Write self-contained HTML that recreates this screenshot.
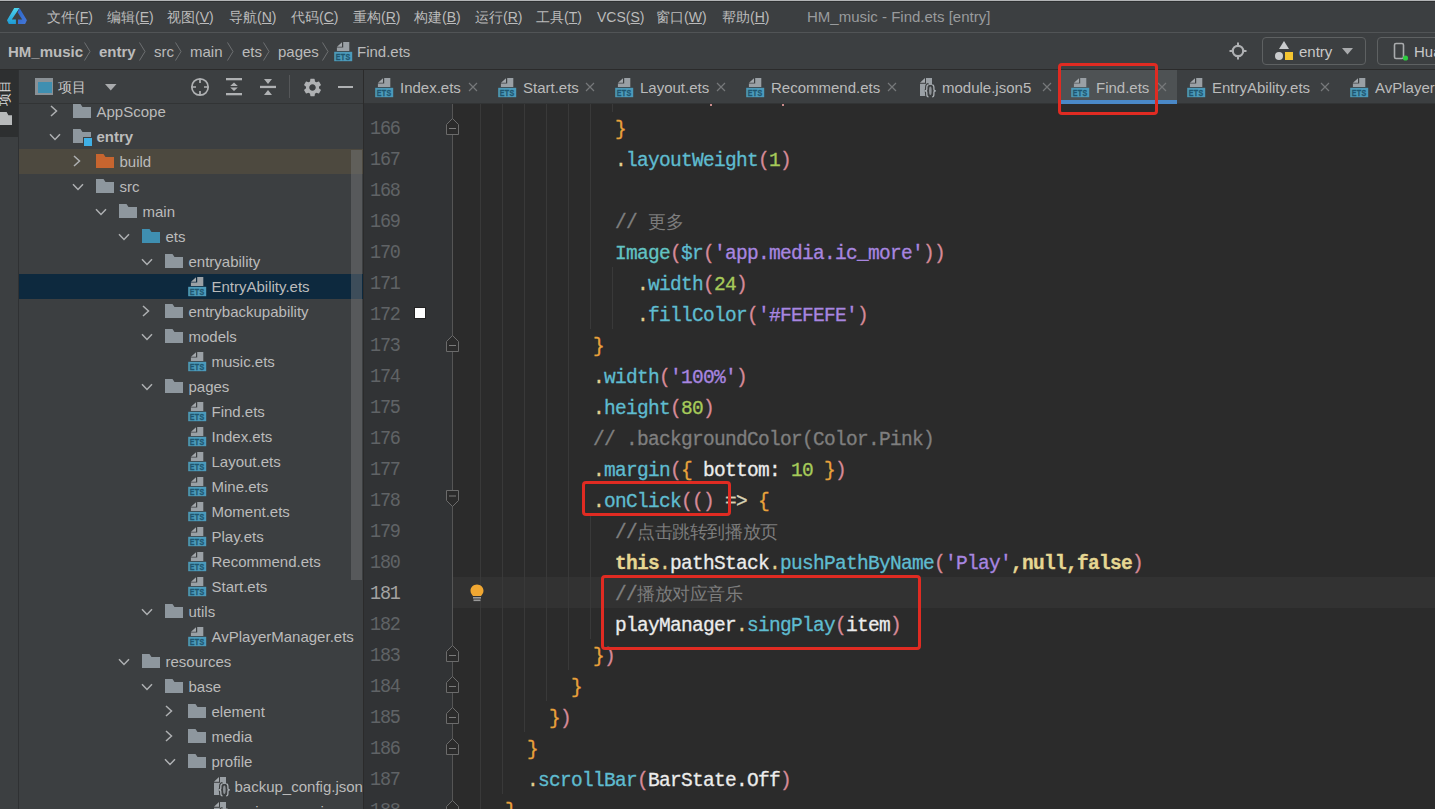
<!DOCTYPE html><html><head><meta charset="utf-8"><title>DevEco</title><style>
html,body{margin:0;padding:0;width:1435px;height:809px;overflow:hidden;background:#3c3f41;font-family:"Liberation Sans",sans-serif;}
div,span,svg{box-sizing:border-box}
.a{position:absolute}
.ui{color:#bbbbbb;font-size:15px;white-space:pre;line-height:20px}
.code{position:absolute;font-family:"Liberation Mono",monospace;font-size:19.50px;letter-spacing:-0.702px;line-height:31px;height:31px;white-space:pre;-webkit-text-stroke:0.3px currentColor}
.ln{position:absolute;font-family:"Liberation Mono",monospace;font-size:18.5px;letter-spacing:-1.3px;line-height:31px;color:#606366;white-space:pre;text-align:right;width:40px;transform:scaleY(1.1);transform-origin:0 22px}
.cjk{font-size:17.6px;letter-spacing:0px;display:inline-block;width:17.6px;color:#7d7d7d;-webkit-text-stroke:0}
.guide{position:absolute;width:1px;background:#393939}
.tr{position:absolute;left:19px;width:344px;height:25px}
.tt{position:absolute;top:0;line-height:25px;font-size:15px;color:#bbbbbb;white-space:pre}
</style></head><body>
<div class="a" style="left:0;top:0;width:1435px;height:1px;background:#b2b4b6"></div>
<div class="a" style="left:0;top:1px;width:1435px;height:1px;background:#2e3031"></div>
<div class="a" style="left:0;top:32px;width:1435px;height:1px;background:#515456"></div>
<svg class="a" style="left:2px;top:4px" width="30" height="24" viewBox="0 0 30 24"><defs><linearGradient id="lg1" x1="0" y1="0" x2="0" y2="1"><stop offset="0" stop-color="#4fd6ee"/><stop offset="1" stop-color="#1e9ad4"/></linearGradient><linearGradient id="lg2" x1="0" y1="0" x2="1" y2="1"><stop offset="0" stop-color="#2a66c8"/><stop offset="1" stop-color="#4677d8"/></linearGradient></defs><path d="M12.2 3.9 L17.5 3.9 L9.8 15.4 L13.9 15.4 L13.9 19.9 L6.8 19.9 L5 16.3 Z" fill="url(#lg1)"/><path d="M17.5 3.9 L24.9 16.3 L23.1 19.9 L16 19.9 L16 15.4 L20.2 15.4 L15.7 8.6 Z" fill="url(#lg2)"/></svg>
<div class="a ui" style="left:47px;top:6.8px;font-size:14px;color:#bbbbbb">文件(<u>F</u>)</div>
<div class="a ui" style="left:107px;top:6.8px;font-size:14px;color:#bbbbbb">编辑(<u>E</u>)</div>
<div class="a ui" style="left:167px;top:6.8px;font-size:14px;color:#bbbbbb">视图(<u>V</u>)</div>
<div class="a ui" style="left:229px;top:6.8px;font-size:14px;color:#bbbbbb">导航(<u>N</u>)</div>
<div class="a ui" style="left:291px;top:6.8px;font-size:14px;color:#bbbbbb">代码(<u>C</u>)</div>
<div class="a ui" style="left:353px;top:6.8px;font-size:14px;color:#bbbbbb">重构(<u>R</u>)</div>
<div class="a ui" style="left:414px;top:6.8px;font-size:14px;color:#bbbbbb">构建(<u>B</u>)</div>
<div class="a ui" style="left:475px;top:6.8px;font-size:14px;color:#bbbbbb">运行(<u>R</u>)</div>
<div class="a ui" style="left:536px;top:6.8px;font-size:14px;color:#bbbbbb">工具(<u>T</u>)</div>
<div class="a ui" style="left:597px;top:6.8px;font-size:14px;color:#bbbbbb">VCS(<u>S</u>)</div>
<div class="a ui" style="left:656px;top:6.8px;font-size:14px;color:#bbbbbb">窗口(<u>W</u>)</div>
<div class="a ui" style="left:722px;top:6.8px;font-size:14px;color:#bbbbbb">帮助(<u>H</u>)</div>
<div class="a ui" style="left:807px;top:6.5px;font-size:15px;color:#999b9d">HM_music - Find.ets [entry]</div>
<div class="a" style="left:0;top:69px;width:1435px;height:1px;background:#2b2b2b"></div>
<div class="a ui" style="left:8px;top:41.5px;font-weight:bold;color:#bbbbbb">HM_music</div>
<svg class="a" style="left:84px;top:42px" width="7" height="19" viewBox="0 0 7 19"><path d="M0.5 0.5 L6 9.5 L0.5 18.5" stroke="#6e7072" stroke-width="1" fill="none"/></svg>
<div class="a ui" style="left:99px;top:41.5px;font-weight:bold">entry</div>
<svg class="a" style="left:139px;top:42px" width="7" height="19" viewBox="0 0 7 19"><path d="M0.5 0.5 L6 9.5 L0.5 18.5" stroke="#6e7072" stroke-width="1" fill="none"/></svg>
<div class="a ui" style="left:154px;top:41.5px">src</div>
<svg class="a" style="left:175px;top:42px" width="7" height="19" viewBox="0 0 7 19"><path d="M0.5 0.5 L6 9.5 L0.5 18.5" stroke="#6e7072" stroke-width="1" fill="none"/></svg>
<div class="a ui" style="left:190px;top:41.5px">main</div>
<svg class="a" style="left:227px;top:42px" width="7" height="19" viewBox="0 0 7 19"><path d="M0.5 0.5 L6 9.5 L0.5 18.5" stroke="#6e7072" stroke-width="1" fill="none"/></svg>
<div class="a ui" style="left:242px;top:41.5px">ets</div>
<svg class="a" style="left:263px;top:42px" width="7" height="19" viewBox="0 0 7 19"><path d="M0.5 0.5 L6 9.5 L0.5 18.5" stroke="#6e7072" stroke-width="1" fill="none"/></svg>
<div class="a ui" style="left:278px;top:41.5px">pages</div>
<svg class="a" style="left:322px;top:42px" width="7" height="19" viewBox="0 0 7 19"><path d="M0.5 0.5 L6 9.5 L0.5 18.5" stroke="#6e7072" stroke-width="1" fill="none"/></svg>
<svg class="a" style="left:333px;top:41px" width="21" height="21" viewBox="0 0 21 21"><path d="M4 5.7 L9 1.2 L9 5.7 Z" fill="#a3a8ac"/><path d="M10.2 0.9 H16.3 V9.9 H3.9 V6.6 H10.2 Z" fill="#9aa0a5"/><rect x="1.2" y="10.8" width="18" height="9.4" fill="#4c9aba"/><text x="10.2" y="18.9" font-family="Liberation Sans" font-size="8.6" font-weight="bold" text-anchor="middle" fill="#1f5670" stroke="#1f5670" stroke-width="0.3" letter-spacing="0.5" textLength="15" lengthAdjust="spacingAndGlyphs">ETS</text></svg>
<div class="a ui" style="left:357px;top:41.5px">Find.ets</div>
<svg class="a" style="left:1229px;top:42px" width="18" height="18" viewBox="0 0 18 18"><circle cx="9" cy="9" r="5.2" stroke="#afb1b3" stroke-width="2.2" fill="none"/><path d="M9 0.5 V3.5 M9 14.5 V17.5 M0.5 9 H3.5 M14.5 9 H17.5" stroke="#afb1b3" stroke-width="2"/></svg>
<div class="a" style="left:1262px;top:37px;width:104px;height:28px;border:1px solid #5e6162;border-radius:4px"></div>
<svg class="a" style="left:1274px;top:40px" width="20" height="21" viewBox="0 0 20 21"><path d="M10 1 L15 9 L5 9 Z" fill="#c9cbcd"/><circle cx="5" cy="16" r="4" fill="#c9cbcd"/><rect x="11" y="12" width="8" height="8" fill="#f4c531"/></svg>
<div class="a ui" style="left:1299px;top:42px;color:#c8c8c8">entry</div>
<svg class="a" style="left:1342px;top:48px" width="12" height="7" viewBox="0 0 12 7"><path d="M0 0 H11 L5.5 6.5 Z" fill="#a9abad"/></svg>
<div class="a" style="left:1377px;top:37px;width:80px;height:28px;border:1px solid #5e6162;border-radius:4px"></div>
<svg class="a" style="left:1393px;top:42px" width="16" height="20" viewBox="0 0 16 20"><rect x="1.5" y="1.5" width="9" height="15" rx="1.5" stroke="#a9abad" stroke-width="1.6" fill="none"/><circle cx="12.5" cy="16" r="2.6" fill="#2ecc40"/></svg>
<div class="a ui" style="left:1414px;top:42px;color:#c8c8c8">Huawei</div>
<div class="a" style="left:0;top:70px;width:18px;height:739px;background:#3c3f41"></div>
<div class="a" style="left:0;top:70px;width:18px;height:67px;background:#2d2f30"></div>
<div class="a" style="left:18px;top:70px;width:1px;height:739px;background:#2f3133"></div>
<div class="a" style="left:-9px;top:86px;width:26px;height:13px;transform:rotate(-90deg);font-size:13px;color:#dddddd;line-height:13px;white-space:pre;">项目</div>
<div class="a" style="left:0;top:112px;width:12px;height:13px;background:#b8babb;clip-path:polygon(0 0,55% 0,70% 25%,100% 25%,100% 100%,0 100%)"></div>
<div class="a" style="left:19px;top:70px;width:344px;height:739px;background:#3c3f41"></div>
<div class="a" style="left:19px;top:103px;width:344px;height:1px;background:#323435"></div>
<div class="a" style="left:363px;top:70px;width:1px;height:739px;background:#2b2b2b"></div>
<div class="a" style="left:35px;top:78px;width:18px;height:17px;background:#8a9196"></div>
<div class="a" style="left:37.5px;top:82px;width:14px;height:11px;background:#3f8fb1"></div>
<div class="a ui" style="left:58px;top:77px;font-size:14px;color:#c8c8c8">项目</div>
<svg class="a" style="left:105px;top:84px" width="12" height="7" viewBox="0 0 12 7"><path d="M0 0 H11.5 L5.75 6.5 Z" fill="#a9abad"/></svg>
<svg class="a" style="left:190px;top:77px" width="20" height="20" viewBox="0 0 20 20"><circle cx="10" cy="10" r="8.2" stroke="#afb1b3" stroke-width="1.7" fill="none"/><path d="M10 2 V6 M10 14 V18 M2 10 H6 M14 10 H18" stroke="#afb1b3" stroke-width="1.7"/></svg>
<svg class="a" style="left:226px;top:78px" width="16" height="18" viewBox="0 0 16 18"><rect x="0" y="0" width="16" height="2.3" fill="#afb1b3"/><rect x="0" y="15" width="16" height="2.3" fill="#afb1b3"/><path d="M8 4.6 L11.8 8.1 H4.2 Z M8 12.9 L11.8 9.4 H4.2 Z" fill="#afb1b3"/></svg>
<svg class="a" style="left:260px;top:78px" width="16" height="18" viewBox="0 0 16 18"><rect x="0" y="7.8" width="16" height="2.3" fill="#afb1b3"/><path d="M4 1 H12 L8 6 Z M4 17 H12 L8 12 Z" fill="#afb1b3"/></svg>
<div class="a" style="left:289px;top:75px;width:1px;height:23px;background:#555759"></div>
<svg class="a" style="left:302.5px;top:77.5px" width="19" height="19" viewBox="1.5 1.5 21 21"><path fill="#afb1b3" d="M19.14 12.94c.04-.3.06-.61.06-.94 0-.32-.02-.64-.07-.94l2.03-1.58a.49.49 0 0 0 .12-.61l-1.92-3.32a.488.488 0 0 0-.59-.22l-2.39.96c-.5-.38-1.03-.7-1.62-.94l-.36-2.54a.484.484 0 0 0-.48-.41h-3.84c-.24 0-.43.17-.47.41l-.36 2.54c-.59.24-1.13.57-1.62.94l-2.39-.96c-.22-.08-.47 0-.59.22L2.74 8.87c-.12.21-.08.47.12.61l2.03 1.58c-.05.3-.09.63-.09.94s.02.64.07.94l-2.03 1.58a.49.49 0 0 0-.12.61l1.92 3.32c.12.22.37.29.59.22l2.39-.96c.5.38 1.03.7 1.62.94l.36 2.54c.05.24.24.41.48.41h3.84c.24 0 .44-.17.47-.41l.36-2.54c.59-.24 1.13-.56 1.62-.94l2.39.96c.22.08.47 0 .59-.22l1.92-3.32c.12-.22.07-.47-.12-.61l-2.01-1.58zM12 15.6c-1.98 0-3.6-1.62-3.6-3.6s1.62-3.6 3.6-3.6 3.6 1.62 3.6 3.6-1.62 3.6-3.6 3.6z"/></svg>
<div class="a" style="left:338px;top:86px;width:15px;height:2px;background:#afb1b3"></div>
<div class="a" style="left:19px;top:104px;width:344px;height:705px;overflow:hidden">
<svg class="a" style="left:31.0px;top:1.0px" width="8" height="12" viewBox="0 0 8 12"><path d="M1 1 L6.5 6 L1 11" stroke="#aeb0b2" stroke-width="1.5" fill="none"/></svg>
<svg class="a" style="left:54px;top:0px" width="18" height="14" viewBox="0 0 18 14"><path d="M0 0 H7.5 L9.5 3 H18 V14 H0 Z" fill="#8e979e"/></svg>
<div class="tt" style="left:77.5px;top:-5px;font-weight:normal">AppScope</div>
<svg class="a" style="left:30.0px;top:28.5px" width="12" height="8" viewBox="0 0 12 8"><path d="M1 1.2 L6 6.5 L11 1.2" stroke="#aeb0b2" stroke-width="1.5" fill="none"/></svg>
<svg class="a" style="left:54px;top:25px" width="18" height="14" viewBox="0 0 18 14"><path d="M0 0 H7.5 L9.5 3 H18 V14 H0 Z" fill="#8e979e"/></svg>
<div class="a" style="left:64px;top:33px;width:10px;height:10px;background:#3fb0e6;border:1px solid #3c3f41"></div>
<div class="tt" style="left:77.5px;top:20px;font-weight:bold">entry</div>
<div class="a" style="left:0;top:45px;width:344px;height:25px;background:#4d493f"></div>
<svg class="a" style="left:54.0px;top:51.0px" width="8" height="12" viewBox="0 0 8 12"><path d="M1 1 L6.5 6 L1 11" stroke="#aeb0b2" stroke-width="1.5" fill="none"/></svg>
<svg class="a" style="left:77px;top:50px" width="18" height="14" viewBox="0 0 18 14"><path d="M0 0 H7.5 L9.5 3 H18 V14 H0 Z" fill="#c7652f"/></svg>
<div class="tt" style="left:100.5px;top:45px;font-weight:normal">build</div>
<svg class="a" style="left:53.0px;top:78.5px" width="12" height="8" viewBox="0 0 12 8"><path d="M1 1.2 L6 6.5 L11 1.2" stroke="#aeb0b2" stroke-width="1.5" fill="none"/></svg>
<svg class="a" style="left:77px;top:75px" width="18" height="14" viewBox="0 0 18 14"><path d="M0 0 H7.5 L9.5 3 H18 V14 H0 Z" fill="#8e979e"/></svg>
<div class="tt" style="left:100.5px;top:70px;font-weight:normal">src</div>
<svg class="a" style="left:76.0px;top:103.5px" width="12" height="8" viewBox="0 0 12 8"><path d="M1 1.2 L6 6.5 L11 1.2" stroke="#aeb0b2" stroke-width="1.5" fill="none"/></svg>
<svg class="a" style="left:100px;top:100px" width="18" height="14" viewBox="0 0 18 14"><path d="M0 0 H7.5 L9.5 3 H18 V14 H0 Z" fill="#8e979e"/></svg>
<div class="tt" style="left:123.5px;top:95px;font-weight:normal">main</div>
<svg class="a" style="left:99.0px;top:128.5px" width="12" height="8" viewBox="0 0 12 8"><path d="M1 1.2 L6 6.5 L11 1.2" stroke="#aeb0b2" stroke-width="1.5" fill="none"/></svg>
<svg class="a" style="left:123px;top:125px" width="18" height="14" viewBox="0 0 18 14"><path d="M0 0 H7.5 L9.5 3 H18 V14 H0 Z" fill="#3f8fb1"/></svg>
<div class="tt" style="left:146.5px;top:120px;font-weight:normal">ets</div>
<svg class="a" style="left:122.0px;top:153.5px" width="12" height="8" viewBox="0 0 12 8"><path d="M1 1.2 L6 6.5 L11 1.2" stroke="#aeb0b2" stroke-width="1.5" fill="none"/></svg>
<svg class="a" style="left:146px;top:150px" width="18" height="14" viewBox="0 0 18 14"><path d="M0 0 H7.5 L9.5 3 H18 V14 H0 Z" fill="#8e979e"/></svg>
<div class="tt" style="left:169.5px;top:145px;font-weight:normal">entryability</div>
<div class="a" style="left:0;top:170px;width:344px;height:25px;background:#0d293e"></div>
<svg class="a" style="left:168px;top:172px" width="21" height="21" viewBox="0 0 21 21"><path d="M4 5.7 L9 1.2 L9 5.7 Z" fill="#a3a8ac"/><path d="M10.2 0.9 H16.3 V9.9 H3.9 V6.6 H10.2 Z" fill="#9aa0a5"/><rect x="1.2" y="10.8" width="18" height="9.4" fill="#4c9aba"/><text x="10.2" y="18.9" font-family="Liberation Sans" font-size="8.6" font-weight="bold" text-anchor="middle" fill="#1f5670" stroke="#1f5670" stroke-width="0.3" letter-spacing="0.5" textLength="15" lengthAdjust="spacingAndGlyphs">ETS</text></svg>
<div class="tt" style="left:192.5px;top:170px;font-weight:normal">EntryAbility.ets</div>
<svg class="a" style="left:123.0px;top:201.0px" width="8" height="12" viewBox="0 0 8 12"><path d="M1 1 L6.5 6 L1 11" stroke="#aeb0b2" stroke-width="1.5" fill="none"/></svg>
<svg class="a" style="left:146px;top:200px" width="18" height="14" viewBox="0 0 18 14"><path d="M0 0 H7.5 L9.5 3 H18 V14 H0 Z" fill="#8e979e"/></svg>
<div class="tt" style="left:169.5px;top:195px;font-weight:normal">entrybackupability</div>
<svg class="a" style="left:122.0px;top:228.5px" width="12" height="8" viewBox="0 0 12 8"><path d="M1 1.2 L6 6.5 L11 1.2" stroke="#aeb0b2" stroke-width="1.5" fill="none"/></svg>
<svg class="a" style="left:146px;top:225px" width="18" height="14" viewBox="0 0 18 14"><path d="M0 0 H7.5 L9.5 3 H18 V14 H0 Z" fill="#8e979e"/></svg>
<div class="tt" style="left:169.5px;top:220px;font-weight:normal">models</div>
<svg class="a" style="left:168px;top:247px" width="21" height="21" viewBox="0 0 21 21"><path d="M4 5.7 L9 1.2 L9 5.7 Z" fill="#a3a8ac"/><path d="M10.2 0.9 H16.3 V9.9 H3.9 V6.6 H10.2 Z" fill="#9aa0a5"/><rect x="1.2" y="10.8" width="18" height="9.4" fill="#4c9aba"/><text x="10.2" y="18.9" font-family="Liberation Sans" font-size="8.6" font-weight="bold" text-anchor="middle" fill="#1f5670" stroke="#1f5670" stroke-width="0.3" letter-spacing="0.5" textLength="15" lengthAdjust="spacingAndGlyphs">ETS</text></svg>
<div class="tt" style="left:192.5px;top:245px;font-weight:normal">music.ets</div>
<svg class="a" style="left:122.0px;top:278.5px" width="12" height="8" viewBox="0 0 12 8"><path d="M1 1.2 L6 6.5 L11 1.2" stroke="#aeb0b2" stroke-width="1.5" fill="none"/></svg>
<svg class="a" style="left:146px;top:275px" width="18" height="14" viewBox="0 0 18 14"><path d="M0 0 H7.5 L9.5 3 H18 V14 H0 Z" fill="#8e979e"/></svg>
<div class="tt" style="left:169.5px;top:270px;font-weight:normal">pages</div>
<svg class="a" style="left:168px;top:297px" width="21" height="21" viewBox="0 0 21 21"><path d="M4 5.7 L9 1.2 L9 5.7 Z" fill="#a3a8ac"/><path d="M10.2 0.9 H16.3 V9.9 H3.9 V6.6 H10.2 Z" fill="#9aa0a5"/><rect x="1.2" y="10.8" width="18" height="9.4" fill="#4c9aba"/><text x="10.2" y="18.9" font-family="Liberation Sans" font-size="8.6" font-weight="bold" text-anchor="middle" fill="#1f5670" stroke="#1f5670" stroke-width="0.3" letter-spacing="0.5" textLength="15" lengthAdjust="spacingAndGlyphs">ETS</text></svg>
<div class="tt" style="left:192.5px;top:295px;font-weight:normal">Find.ets</div>
<svg class="a" style="left:168px;top:322px" width="21" height="21" viewBox="0 0 21 21"><path d="M4 5.7 L9 1.2 L9 5.7 Z" fill="#a3a8ac"/><path d="M10.2 0.9 H16.3 V9.9 H3.9 V6.6 H10.2 Z" fill="#9aa0a5"/><rect x="1.2" y="10.8" width="18" height="9.4" fill="#4c9aba"/><text x="10.2" y="18.9" font-family="Liberation Sans" font-size="8.6" font-weight="bold" text-anchor="middle" fill="#1f5670" stroke="#1f5670" stroke-width="0.3" letter-spacing="0.5" textLength="15" lengthAdjust="spacingAndGlyphs">ETS</text></svg>
<div class="tt" style="left:192.5px;top:320px;font-weight:normal">Index.ets</div>
<svg class="a" style="left:168px;top:347px" width="21" height="21" viewBox="0 0 21 21"><path d="M4 5.7 L9 1.2 L9 5.7 Z" fill="#a3a8ac"/><path d="M10.2 0.9 H16.3 V9.9 H3.9 V6.6 H10.2 Z" fill="#9aa0a5"/><rect x="1.2" y="10.8" width="18" height="9.4" fill="#4c9aba"/><text x="10.2" y="18.9" font-family="Liberation Sans" font-size="8.6" font-weight="bold" text-anchor="middle" fill="#1f5670" stroke="#1f5670" stroke-width="0.3" letter-spacing="0.5" textLength="15" lengthAdjust="spacingAndGlyphs">ETS</text></svg>
<div class="tt" style="left:192.5px;top:345px;font-weight:normal">Layout.ets</div>
<svg class="a" style="left:168px;top:372px" width="21" height="21" viewBox="0 0 21 21"><path d="M4 5.7 L9 1.2 L9 5.7 Z" fill="#a3a8ac"/><path d="M10.2 0.9 H16.3 V9.9 H3.9 V6.6 H10.2 Z" fill="#9aa0a5"/><rect x="1.2" y="10.8" width="18" height="9.4" fill="#4c9aba"/><text x="10.2" y="18.9" font-family="Liberation Sans" font-size="8.6" font-weight="bold" text-anchor="middle" fill="#1f5670" stroke="#1f5670" stroke-width="0.3" letter-spacing="0.5" textLength="15" lengthAdjust="spacingAndGlyphs">ETS</text></svg>
<div class="tt" style="left:192.5px;top:370px;font-weight:normal">Mine.ets</div>
<svg class="a" style="left:168px;top:397px" width="21" height="21" viewBox="0 0 21 21"><path d="M4 5.7 L9 1.2 L9 5.7 Z" fill="#a3a8ac"/><path d="M10.2 0.9 H16.3 V9.9 H3.9 V6.6 H10.2 Z" fill="#9aa0a5"/><rect x="1.2" y="10.8" width="18" height="9.4" fill="#4c9aba"/><text x="10.2" y="18.9" font-family="Liberation Sans" font-size="8.6" font-weight="bold" text-anchor="middle" fill="#1f5670" stroke="#1f5670" stroke-width="0.3" letter-spacing="0.5" textLength="15" lengthAdjust="spacingAndGlyphs">ETS</text></svg>
<div class="tt" style="left:192.5px;top:395px;font-weight:normal">Moment.ets</div>
<svg class="a" style="left:168px;top:422px" width="21" height="21" viewBox="0 0 21 21"><path d="M4 5.7 L9 1.2 L9 5.7 Z" fill="#a3a8ac"/><path d="M10.2 0.9 H16.3 V9.9 H3.9 V6.6 H10.2 Z" fill="#9aa0a5"/><rect x="1.2" y="10.8" width="18" height="9.4" fill="#4c9aba"/><text x="10.2" y="18.9" font-family="Liberation Sans" font-size="8.6" font-weight="bold" text-anchor="middle" fill="#1f5670" stroke="#1f5670" stroke-width="0.3" letter-spacing="0.5" textLength="15" lengthAdjust="spacingAndGlyphs">ETS</text></svg>
<div class="tt" style="left:192.5px;top:420px;font-weight:normal">Play.ets</div>
<svg class="a" style="left:168px;top:447px" width="21" height="21" viewBox="0 0 21 21"><path d="M4 5.7 L9 1.2 L9 5.7 Z" fill="#a3a8ac"/><path d="M10.2 0.9 H16.3 V9.9 H3.9 V6.6 H10.2 Z" fill="#9aa0a5"/><rect x="1.2" y="10.8" width="18" height="9.4" fill="#4c9aba"/><text x="10.2" y="18.9" font-family="Liberation Sans" font-size="8.6" font-weight="bold" text-anchor="middle" fill="#1f5670" stroke="#1f5670" stroke-width="0.3" letter-spacing="0.5" textLength="15" lengthAdjust="spacingAndGlyphs">ETS</text></svg>
<div class="tt" style="left:192.5px;top:445px;font-weight:normal">Recommend.ets</div>
<svg class="a" style="left:168px;top:472px" width="21" height="21" viewBox="0 0 21 21"><path d="M4 5.7 L9 1.2 L9 5.7 Z" fill="#a3a8ac"/><path d="M10.2 0.9 H16.3 V9.9 H3.9 V6.6 H10.2 Z" fill="#9aa0a5"/><rect x="1.2" y="10.8" width="18" height="9.4" fill="#4c9aba"/><text x="10.2" y="18.9" font-family="Liberation Sans" font-size="8.6" font-weight="bold" text-anchor="middle" fill="#1f5670" stroke="#1f5670" stroke-width="0.3" letter-spacing="0.5" textLength="15" lengthAdjust="spacingAndGlyphs">ETS</text></svg>
<div class="tt" style="left:192.5px;top:470px;font-weight:normal">Start.ets</div>
<svg class="a" style="left:122.0px;top:503.5px" width="12" height="8" viewBox="0 0 12 8"><path d="M1 1.2 L6 6.5 L11 1.2" stroke="#aeb0b2" stroke-width="1.5" fill="none"/></svg>
<svg class="a" style="left:146px;top:500px" width="18" height="14" viewBox="0 0 18 14"><path d="M0 0 H7.5 L9.5 3 H18 V14 H0 Z" fill="#8e979e"/></svg>
<div class="tt" style="left:169.5px;top:495px;font-weight:normal">utils</div>
<svg class="a" style="left:168px;top:522px" width="21" height="21" viewBox="0 0 21 21"><path d="M4 5.7 L9 1.2 L9 5.7 Z" fill="#a3a8ac"/><path d="M10.2 0.9 H16.3 V9.9 H3.9 V6.6 H10.2 Z" fill="#9aa0a5"/><rect x="1.2" y="10.8" width="18" height="9.4" fill="#4c9aba"/><text x="10.2" y="18.9" font-family="Liberation Sans" font-size="8.6" font-weight="bold" text-anchor="middle" fill="#1f5670" stroke="#1f5670" stroke-width="0.3" letter-spacing="0.5" textLength="15" lengthAdjust="spacingAndGlyphs">ETS</text></svg>
<div class="tt" style="left:192.5px;top:520px;font-weight:normal">AvPlayerManager.ets</div>
<svg class="a" style="left:99.0px;top:553.5px" width="12" height="8" viewBox="0 0 12 8"><path d="M1 1.2 L6 6.5 L11 1.2" stroke="#aeb0b2" stroke-width="1.5" fill="none"/></svg>
<svg class="a" style="left:123px;top:550px" width="18" height="14" viewBox="0 0 18 14"><path d="M0 0 H7.5 L9.5 3 H18 V14 H0 Z" fill="#8e979e"/></svg>
<div class="tt" style="left:146.5px;top:545px;font-weight:normal">resources</div>
<svg class="a" style="left:122.0px;top:578.5px" width="12" height="8" viewBox="0 0 12 8"><path d="M1 1.2 L6 6.5 L11 1.2" stroke="#aeb0b2" stroke-width="1.5" fill="none"/></svg>
<svg class="a" style="left:146px;top:575px" width="18" height="14" viewBox="0 0 18 14"><path d="M0 0 H7.5 L9.5 3 H18 V14 H0 Z" fill="#8e979e"/></svg>
<div class="tt" style="left:169.5px;top:570px;font-weight:normal">base</div>
<svg class="a" style="left:146.0px;top:601.0px" width="8" height="12" viewBox="0 0 8 12"><path d="M1 1 L6.5 6 L1 11" stroke="#aeb0b2" stroke-width="1.5" fill="none"/></svg>
<svg class="a" style="left:169px;top:600px" width="18" height="14" viewBox="0 0 18 14"><path d="M0 0 H7.5 L9.5 3 H18 V14 H0 Z" fill="#8e979e"/></svg>
<div class="tt" style="left:192.5px;top:595px;font-weight:normal">element</div>
<svg class="a" style="left:146.0px;top:626.0px" width="8" height="12" viewBox="0 0 8 12"><path d="M1 1 L6.5 6 L1 11" stroke="#aeb0b2" stroke-width="1.5" fill="none"/></svg>
<svg class="a" style="left:169px;top:625px" width="18" height="14" viewBox="0 0 18 14"><path d="M0 0 H7.5 L9.5 3 H18 V14 H0 Z" fill="#8e979e"/></svg>
<div class="tt" style="left:192.5px;top:620px;font-weight:normal">media</div>
<svg class="a" style="left:145.0px;top:653.5px" width="12" height="8" viewBox="0 0 12 8"><path d="M1 1.2 L6 6.5 L11 1.2" stroke="#aeb0b2" stroke-width="1.5" fill="none"/></svg>
<svg class="a" style="left:169px;top:650px" width="18" height="14" viewBox="0 0 18 14"><path d="M0 0 H7.5 L9.5 3 H18 V14 H0 Z" fill="#8e979e"/></svg>
<div class="tt" style="left:192.5px;top:645px;font-weight:normal">profile</div>
<svg class="a" style="left:192.0px;top:672.0px" width="21" height="21" viewBox="0 0 21 21"><path d="M3 5.7 L8 1 L8 5.7 Z" fill="#a4a9ad"/><rect x="9" y="1" width="6" height="7" fill="#9aa0a5"/><rect x="3" y="6.8" width="12" height="12.2" fill="#9aa0a5"/><path d="M11.5 7.8 C9.8 7.8 9.8 9 9.8 10.5 V12.2 C9.8 13.2 9 13.8 7.8 13.8 C9 13.8 9.8 14.4 9.8 15.4 V17.2 C9.8 18.7 9.8 19.8 11.5 19.8 M15.2 7.8 C16.9 7.8 16.9 9 16.9 10.5 V12.2 C16.9 13.2 17.7 13.8 18.9 13.8 C17.7 13.8 16.9 14.4 16.9 15.4 V17.2 C16.9 18.7 16.9 19.8 15.2 19.8" stroke="#3c3f41" stroke-width="3.6" fill="#3c3f41"/><rect x="9.6" y="8" width="7.6" height="11.6" fill="#3c3f41"/><path d="M11.5 7.8 C9.8 7.8 9.8 9 9.8 10.5 V12.2 C9.8 13.2 9 13.8 7.8 13.8 C9 13.8 9.8 14.4 9.8 15.4 V17.2 C9.8 18.7 9.8 19.8 11.5 19.8 M15.2 7.8 C16.9 7.8 16.9 9 16.9 10.5 V12.2 C16.9 13.2 17.7 13.8 18.9 13.8 C17.7 13.8 16.9 14.4 16.9 15.4 V17.2 C16.9 18.7 16.9 19.8 15.2 19.8" stroke="#a9aeb2" stroke-width="1.3" fill="none"/><ellipse cx="13.35" cy="13.8" rx="1.3" ry="4.2" fill="#8d9296"/></svg>
<div class="tt" style="left:215.5px;top:670px;font-weight:normal">backup_config.json</div>
<svg class="a" style="left:192.0px;top:697.0px" width="21" height="21" viewBox="0 0 21 21"><path d="M3 5.7 L8 1 L8 5.7 Z" fill="#a4a9ad"/><rect x="9" y="1" width="6" height="7" fill="#9aa0a5"/><rect x="3" y="6.8" width="12" height="12.2" fill="#9aa0a5"/><path d="M11.5 7.8 C9.8 7.8 9.8 9 9.8 10.5 V12.2 C9.8 13.2 9 13.8 7.8 13.8 C9 13.8 9.8 14.4 9.8 15.4 V17.2 C9.8 18.7 9.8 19.8 11.5 19.8 M15.2 7.8 C16.9 7.8 16.9 9 16.9 10.5 V12.2 C16.9 13.2 17.7 13.8 18.9 13.8 C17.7 13.8 16.9 14.4 16.9 15.4 V17.2 C16.9 18.7 16.9 19.8 15.2 19.8" stroke="#3c3f41" stroke-width="3.6" fill="#3c3f41"/><rect x="9.6" y="8" width="7.6" height="11.6" fill="#3c3f41"/><path d="M11.5 7.8 C9.8 7.8 9.8 9 9.8 10.5 V12.2 C9.8 13.2 9 13.8 7.8 13.8 C9 13.8 9.8 14.4 9.8 15.4 V17.2 C9.8 18.7 9.8 19.8 11.5 19.8 M15.2 7.8 C16.9 7.8 16.9 9 16.9 10.5 V12.2 C16.9 13.2 17.7 13.8 18.9 13.8 C17.7 13.8 16.9 14.4 16.9 15.4 V17.2 C16.9 18.7 16.9 19.8 15.2 19.8" stroke="#a9aeb2" stroke-width="1.3" fill="none"/><ellipse cx="13.35" cy="13.8" rx="1.3" ry="4.2" fill="#8d9296"/></svg>
<div class="tt" style="left:215.5px;top:695px;font-weight:normal">main_pages.json</div>
</div>
<div class="a" style="left:351px;top:150px;width:11px;height:430px;background:rgba(120,122,124,0.45)"></div>
<div class="a" style="left:364px;top:70px;width:1071px;height:33px;background:#3c3f41"></div>
<div class="a" style="left:364px;top:103px;width:1071px;height:1px;background:#323435"></div>
<div class="a" style="left:1061px;top:70px;width:116px;height:30px;background:#4e5254"></div>
<div class="a" style="left:1061px;top:100px;width:116px;height:3.5px;background:#4a88c7"></div>
<svg class="a" style="left:374px;top:77px" width="21" height="21" viewBox="0 0 21 21"><path d="M4 5.7 L9 1.2 L9 5.7 Z" fill="#a3a8ac"/><path d="M10.2 0.9 H16.3 V9.9 H3.9 V6.6 H10.2 Z" fill="#9aa0a5"/><rect x="1.2" y="10.8" width="18" height="9.4" fill="#4c9aba"/><text x="10.2" y="18.9" font-family="Liberation Sans" font-size="8.6" font-weight="bold" text-anchor="middle" fill="#1f5670" stroke="#1f5670" stroke-width="0.3" letter-spacing="0.5" textLength="15" lengthAdjust="spacingAndGlyphs">ETS</text></svg>
<div class="a ui" style="left:400px;top:77.5px;color:#bbbbbb">Index.ets</div>
<svg class="a" style="left:497px;top:77px" width="21" height="21" viewBox="0 0 21 21"><path d="M4 5.7 L9 1.2 L9 5.7 Z" fill="#a3a8ac"/><path d="M10.2 0.9 H16.3 V9.9 H3.9 V6.6 H10.2 Z" fill="#9aa0a5"/><rect x="1.2" y="10.8" width="18" height="9.4" fill="#4c9aba"/><text x="10.2" y="18.9" font-family="Liberation Sans" font-size="8.6" font-weight="bold" text-anchor="middle" fill="#1f5670" stroke="#1f5670" stroke-width="0.3" letter-spacing="0.5" textLength="15" lengthAdjust="spacingAndGlyphs">ETS</text></svg>
<div class="a ui" style="left:523px;top:77.5px;color:#bbbbbb">Start.ets</div>
<svg class="a" style="left:614px;top:77px" width="21" height="21" viewBox="0 0 21 21"><path d="M4 5.7 L9 1.2 L9 5.7 Z" fill="#a3a8ac"/><path d="M10.2 0.9 H16.3 V9.9 H3.9 V6.6 H10.2 Z" fill="#9aa0a5"/><rect x="1.2" y="10.8" width="18" height="9.4" fill="#4c9aba"/><text x="10.2" y="18.9" font-family="Liberation Sans" font-size="8.6" font-weight="bold" text-anchor="middle" fill="#1f5670" stroke="#1f5670" stroke-width="0.3" letter-spacing="0.5" textLength="15" lengthAdjust="spacingAndGlyphs">ETS</text></svg>
<div class="a ui" style="left:640px;top:77.5px;color:#bbbbbb">Layout.ets</div>
<svg class="a" style="left:745px;top:77px" width="21" height="21" viewBox="0 0 21 21"><path d="M4 5.7 L9 1.2 L9 5.7 Z" fill="#a3a8ac"/><path d="M10.2 0.9 H16.3 V9.9 H3.9 V6.6 H10.2 Z" fill="#9aa0a5"/><rect x="1.2" y="10.8" width="18" height="9.4" fill="#4c9aba"/><text x="10.2" y="18.9" font-family="Liberation Sans" font-size="8.6" font-weight="bold" text-anchor="middle" fill="#1f5670" stroke="#1f5670" stroke-width="0.3" letter-spacing="0.5" textLength="15" lengthAdjust="spacingAndGlyphs">ETS</text></svg>
<div class="a ui" style="left:771px;top:77.5px;color:#bbbbbb">Recommend.ets</div>
<svg class="a" style="left:917.0px;top:77.0px" width="21" height="21" viewBox="0 0 21 21"><path d="M3 5.7 L8 1 L8 5.7 Z" fill="#a4a9ad"/><rect x="9" y="1" width="6" height="7" fill="#9aa0a5"/><rect x="3" y="6.8" width="12" height="12.2" fill="#9aa0a5"/><path d="M11.5 7.8 C9.8 7.8 9.8 9 9.8 10.5 V12.2 C9.8 13.2 9 13.8 7.8 13.8 C9 13.8 9.8 14.4 9.8 15.4 V17.2 C9.8 18.7 9.8 19.8 11.5 19.8 M15.2 7.8 C16.9 7.8 16.9 9 16.9 10.5 V12.2 C16.9 13.2 17.7 13.8 18.9 13.8 C17.7 13.8 16.9 14.4 16.9 15.4 V17.2 C16.9 18.7 16.9 19.8 15.2 19.8" stroke="#3c3f41" stroke-width="3.6" fill="#3c3f41"/><rect x="9.6" y="8" width="7.6" height="11.6" fill="#3c3f41"/><path d="M11.5 7.8 C9.8 7.8 9.8 9 9.8 10.5 V12.2 C9.8 13.2 9 13.8 7.8 13.8 C9 13.8 9.8 14.4 9.8 15.4 V17.2 C9.8 18.7 9.8 19.8 11.5 19.8 M15.2 7.8 C16.9 7.8 16.9 9 16.9 10.5 V12.2 C16.9 13.2 17.7 13.8 18.9 13.8 C17.7 13.8 16.9 14.4 16.9 15.4 V17.2 C16.9 18.7 16.9 19.8 15.2 19.8" stroke="#a9aeb2" stroke-width="1.3" fill="none"/><ellipse cx="13.35" cy="13.8" rx="1.3" ry="4.2" fill="#8d9296"/></svg>
<div class="a ui" style="left:942px;top:77.5px;color:#bbbbbb">module.json5</div>
<svg class="a" style="left:1070px;top:77px" width="21" height="21" viewBox="0 0 21 21"><path d="M4 5.7 L9 1.2 L9 5.7 Z" fill="#a3a8ac"/><path d="M10.2 0.9 H16.3 V9.9 H3.9 V6.6 H10.2 Z" fill="#9aa0a5"/><rect x="1.2" y="10.8" width="18" height="9.4" fill="#4c9aba"/><text x="10.2" y="18.9" font-family="Liberation Sans" font-size="8.6" font-weight="bold" text-anchor="middle" fill="#1f5670" stroke="#1f5670" stroke-width="0.3" letter-spacing="0.5" textLength="15" lengthAdjust="spacingAndGlyphs">ETS</text></svg>
<div class="a ui" style="left:1096px;top:77.5px;color:#bbbbbb">Find.ets</div>
<svg class="a" style="left:1186px;top:77px" width="21" height="21" viewBox="0 0 21 21"><path d="M4 5.7 L9 1.2 L9 5.7 Z" fill="#a3a8ac"/><path d="M10.2 0.9 H16.3 V9.9 H3.9 V6.6 H10.2 Z" fill="#9aa0a5"/><rect x="1.2" y="10.8" width="18" height="9.4" fill="#4c9aba"/><text x="10.2" y="18.9" font-family="Liberation Sans" font-size="8.6" font-weight="bold" text-anchor="middle" fill="#1f5670" stroke="#1f5670" stroke-width="0.3" letter-spacing="0.5" textLength="15" lengthAdjust="spacingAndGlyphs">ETS</text></svg>
<div class="a ui" style="left:1212px;top:77.5px;color:#bbbbbb">EntryAbility.ets</div>
<svg class="a" style="left:1349px;top:77px" width="21" height="21" viewBox="0 0 21 21"><path d="M4 5.7 L9 1.2 L9 5.7 Z" fill="#a3a8ac"/><path d="M10.2 0.9 H16.3 V9.9 H3.9 V6.6 H10.2 Z" fill="#9aa0a5"/><rect x="1.2" y="10.8" width="18" height="9.4" fill="#4c9aba"/><text x="10.2" y="18.9" font-family="Liberation Sans" font-size="8.6" font-weight="bold" text-anchor="middle" fill="#1f5670" stroke="#1f5670" stroke-width="0.3" letter-spacing="0.5" textLength="15" lengthAdjust="spacingAndGlyphs">ETS</text></svg>
<div class="a ui" style="left:1375px;top:77.5px;color:#bbbbbb">AvPlayerManager.ets</div>
<svg class="a" style="left:468px;top:82px" width="10" height="10" viewBox="0 0 10 10"><path d="M1 1 L9 9 M9 1 L1 9" stroke="#76787a" stroke-width="1.2"/></svg>
<svg class="a" style="left:585px;top:82px" width="10" height="10" viewBox="0 0 10 10"><path d="M1 1 L9 9 M9 1 L1 9" stroke="#76787a" stroke-width="1.2"/></svg>
<svg class="a" style="left:716px;top:82px" width="10" height="10" viewBox="0 0 10 10"><path d="M1 1 L9 9 M9 1 L1 9" stroke="#76787a" stroke-width="1.2"/></svg>
<svg class="a" style="left:887px;top:82px" width="10" height="10" viewBox="0 0 10 10"><path d="M1 1 L9 9 M9 1 L1 9" stroke="#76787a" stroke-width="1.2"/></svg>
<svg class="a" style="left:1042px;top:82px" width="10" height="10" viewBox="0 0 10 10"><path d="M1 1 L9 9 M9 1 L1 9" stroke="#76787a" stroke-width="1.2"/></svg>
<svg class="a" style="left:1157px;top:82px" width="10" height="10" viewBox="0 0 10 10"><path d="M1 1 L9 9 M9 1 L1 9" stroke="#76787a" stroke-width="1.2"/></svg>
<svg class="a" style="left:1320px;top:82px" width="10" height="10" viewBox="0 0 10 10"><path d="M1 1 L9 9 M9 1 L1 9" stroke="#76787a" stroke-width="1.2"/></svg>
<div class="a" style="left:364px;top:104px;width:89px;height:705px;background:#313335"></div>
<div class="a" style="left:453px;top:104px;width:982px;height:705px;background:#2b2b2b"></div>
<div class="a" style="left:0;top:104px;width:1435px;height:705px;overflow:hidden">
<div class="a" style="left:453px;top:473px;width:982px;height:31px;background:#323232"></div>
<div class="a" style="left:452px;top:0;width:1px;height:705px;background:#555555"></div>
<div class="guide" style="left:480px;top:-23px;height:744px"></div>
<div class="guide" style="left:502px;top:-23px;height:713px"></div>
<div class="guide" style="left:524px;top:-23px;height:651px"></div>
<div class="guide" style="left:546px;top:-23px;height:620px"></div>
<div class="guide" style="left:568px;top:-23px;height:589px"></div>
<div class="guide" style="left:590px;top:-23px;height:248px"></div>
<div class="guide" style="left:590px;top:411px;height:124px"></div>
<div class="guide" style="left:612px;top:-23px;height:31px"></div>
<div class="guide" style="left:612px;top:163px;height:62px"></div>
<div class="ln" style="left:359.5px;top:-21.0px;color:#606366">165</div>
<div class="ln" style="left:359.5px;top:10.0px;color:#606366">166</div>
<div class="ln" style="left:359.5px;top:41.0px;color:#606366">167</div>
<div class="ln" style="left:359.5px;top:72.0px;color:#606366">168</div>
<div class="ln" style="left:359.5px;top:103.0px;color:#606366">169</div>
<div class="ln" style="left:359.5px;top:134.0px;color:#606366">170</div>
<div class="ln" style="left:359.5px;top:165.0px;color:#606366">171</div>
<div class="ln" style="left:359.5px;top:196.0px;color:#606366">172</div>
<div class="ln" style="left:359.5px;top:227.0px;color:#606366">173</div>
<div class="ln" style="left:359.5px;top:258.0px;color:#606366">174</div>
<div class="ln" style="left:359.5px;top:289.0px;color:#606366">175</div>
<div class="ln" style="left:359.5px;top:320.0px;color:#606366">176</div>
<div class="ln" style="left:359.5px;top:351.0px;color:#606366">177</div>
<div class="ln" style="left:359.5px;top:382.0px;color:#606366">178</div>
<div class="ln" style="left:359.5px;top:413.0px;color:#606366">179</div>
<div class="ln" style="left:359.5px;top:444.0px;color:#606366">180</div>
<div class="ln" style="left:359.5px;top:475.0px;color:#a4a3a3">181</div>
<div class="ln" style="left:359.5px;top:506.0px;color:#606366">182</div>
<div class="ln" style="left:359.5px;top:537.0px;color:#606366">183</div>
<div class="ln" style="left:359.5px;top:568.0px;color:#606366">184</div>
<div class="ln" style="left:359.5px;top:599.0px;color:#606366">185</div>
<div class="ln" style="left:359.5px;top:630.0px;color:#606366">186</div>
<div class="ln" style="left:359.5px;top:661.0px;color:#606366">187</div>
<div class="ln" style="left:359.5px;top:692.0px;color:#606366">188</div>
<div class="code" style="left:615.0px;top:10.5px"><span style="color:#e9a23b">}</span></div>
<div class="code" style="left:615.0px;top:41.5px"><span style="color:#e3d08f">.</span><span style="color:#5fbcd0">layoutWeight</span><span style="color:#d68a98">(</span><span style="color:#a7cb5a">1</span><span style="color:#d68a98">)</span></div>
<div class="code" style="left:461.0px;top:72.5px"></div>
<div class="code" style="left:615.0px;top:103.5px"><span style="color:#7f7f7f">// <span class="cjk">更</span><span class="cjk">多</span></span></div>
<div class="code" style="left:615.0px;top:134.5px"><span style="color:#62c3c3">Image</span><span style="color:#d68a98">(</span><span style="color:#5fbcd0">$r</span><span style="color:#d68a98">(</span><span style="color:#a886e0">&#x27;app.media.ic_more&#x27;</span><span style="color:#d68a98">))</span></div>
<div class="code" style="left:637.0px;top:165.5px"><span style="color:#e3d08f">.</span><span style="color:#5fbcd0">width</span><span style="color:#d68a98">(</span><span style="color:#a7cb5a">24</span><span style="color:#d68a98">)</span></div>
<div class="code" style="left:637.0px;top:196.5px"><span style="color:#e3d08f">.</span><span style="color:#5fbcd0">fillColor</span><span style="color:#d68a98">(</span><span style="color:#a886e0">&#x27;#FEFEFE&#x27;</span><span style="color:#d68a98">)</span></div>
<div class="code" style="left:593.0px;top:227.5px"><span style="color:#e9a23b">}</span></div>
<div class="code" style="left:593.0px;top:258.5px"><span style="color:#e3d08f">.</span><span style="color:#5fbcd0">width</span><span style="color:#d68a98">(</span><span style="color:#a886e0">&#x27;100%&#x27;</span><span style="color:#d68a98">)</span></div>
<div class="code" style="left:593.0px;top:289.5px"><span style="color:#e3d08f">.</span><span style="color:#5fbcd0">height</span><span style="color:#d68a98">(</span><span style="color:#a7cb5a">80</span><span style="color:#d68a98">)</span></div>
<div class="code" style="left:593.0px;top:320.5px"><span style="color:#7f7f7f">// .backgroundColor(Color.Pink)</span></div>
<div class="code" style="left:593.0px;top:351.5px"><span style="color:#e3d08f">.</span><span style="color:#5fbcd0">margin</span><span style="color:#d68a98">(</span><span style="color:#e9a23b">{</span><span style="color:#ececec"> bottom: </span><span style="color:#a7cb5a">10</span><span style="color:#e9a23b"> }</span><span style="color:#d68a98">)</span></div>
<div class="code" style="left:593.0px;top:382.5px"><span style="color:#e3d08f">.</span><span style="color:#5fbcd0">onClick</span><span style="color:#d68a98">(()</span><span style="color:#d9d2b4"> =&gt; </span><span style="color:#e9a23b">{</span></div>
<div class="code" style="left:615.0px;top:413.5px"><span style="color:#7f7f7f">//<span class="cjk">点</span><span class="cjk">击</span><span class="cjk">跳</span><span class="cjk">转</span><span class="cjk">到</span><span class="cjk">播</span><span class="cjk">放</span><span class="cjk">页</span></span></div>
<div class="code" style="left:615.0px;top:444.5px"><span style="color:#e6d692;font-weight:bold">this</span><span style="color:#e3d08f">.</span><span style="color:#ececec">pathStack</span><span style="color:#e3d08f">.</span><span style="color:#5fbcd0">pushPathByName</span><span style="color:#d68a98">(</span><span style="color:#a886e0">&#x27;Play&#x27;</span><span style="color:#e6d692;font-weight:bold">,null,false</span><span style="color:#d68a98">)</span></div>
<div class="code" style="left:615.0px;top:475.5px"><span style="color:#7f7f7f">//<span class="cjk">播</span><span class="cjk">放</span><span class="cjk">对</span><span class="cjk">应</span><span class="cjk">音</span><span class="cjk">乐</span></span></div>
<div class="code" style="left:615.0px;top:506.5px"><span style="color:#ececec">playManager</span><span style="color:#e3d08f">.</span><span style="color:#5fbcd0">singPlay</span><span style="color:#d68a98">(</span><span style="color:#ececec">item</span><span style="color:#d68a98">)</span></div>
<div class="code" style="left:593.0px;top:537.5px"><span style="color:#e9a23b">}</span><span style="color:#d68a98">)</span></div>
<div class="code" style="left:571.0px;top:568.5px"><span style="color:#e9a23b">}</span></div>
<div class="code" style="left:549.0px;top:599.5px"><span style="color:#e9a23b">}</span><span style="color:#d68a98">)</span></div>
<div class="code" style="left:527.0px;top:630.5px"><span style="color:#e9a23b">}</span></div>
<div class="code" style="left:527.0px;top:661.5px"><span style="color:#e3d08f">.</span><span style="color:#5fbcd0">scrollBar</span><span style="color:#d68a98">(</span><span style="color:#ececec">BarState.Off</span><span style="color:#d68a98">)</span></div>
<div class="code" style="left:505.0px;top:692.5px"><span style="color:#e9a23b">}</span></div>
<svg class="a" style="left:446px;top:14px" width="14" height="18" viewBox="0 0 14 18"><path d="M6.5 0.5 L12.5 6.5 V16.5 H0.5 V6.5 Z" fill="#2b2b2b" stroke="#6b6b6b" stroke-width="1"/><path d="M3 10.5 H10" stroke="#7a7a7a" stroke-width="1"/></svg>
<svg class="a" style="left:446px;top:231px" width="14" height="18" viewBox="0 0 14 18"><path d="M6.5 0.5 L12.5 6.5 V16.5 H0.5 V6.5 Z" fill="#2b2b2b" stroke="#6b6b6b" stroke-width="1"/><path d="M3 10.5 H10" stroke="#7a7a7a" stroke-width="1"/></svg>
<svg class="a" style="left:446px;top:541px" width="14" height="18" viewBox="0 0 14 18"><path d="M6.5 0.5 L12.5 6.5 V16.5 H0.5 V6.5 Z" fill="#2b2b2b" stroke="#6b6b6b" stroke-width="1"/><path d="M3 10.5 H10" stroke="#7a7a7a" stroke-width="1"/></svg>
<svg class="a" style="left:446px;top:572px" width="14" height="18" viewBox="0 0 14 18"><path d="M6.5 0.5 L12.5 6.5 V16.5 H0.5 V6.5 Z" fill="#2b2b2b" stroke="#6b6b6b" stroke-width="1"/><path d="M3 10.5 H10" stroke="#7a7a7a" stroke-width="1"/></svg>
<svg class="a" style="left:446px;top:603px" width="14" height="18" viewBox="0 0 14 18"><path d="M6.5 0.5 L12.5 6.5 V16.5 H0.5 V6.5 Z" fill="#2b2b2b" stroke="#6b6b6b" stroke-width="1"/><path d="M3 10.5 H10" stroke="#7a7a7a" stroke-width="1"/></svg>
<svg class="a" style="left:446px;top:634px" width="14" height="18" viewBox="0 0 14 18"><path d="M6.5 0.5 L12.5 6.5 V16.5 H0.5 V6.5 Z" fill="#2b2b2b" stroke="#6b6b6b" stroke-width="1"/><path d="M3 10.5 H10" stroke="#7a7a7a" stroke-width="1"/></svg>
<svg class="a" style="left:446px;top:696px" width="14" height="18" viewBox="0 0 14 18"><path d="M6.5 0.5 L12.5 6.5 V16.5 H0.5 V6.5 Z" fill="#2b2b2b" stroke="#6b6b6b" stroke-width="1"/><path d="M3 10.5 H10" stroke="#7a7a7a" stroke-width="1"/></svg>
<svg class="a" style="left:446px;top:386px" width="14" height="18" viewBox="0 0 14 18"><path d="M0.5 0.5 H12.5 V10.5 L6.5 16.5 L0.5 10.5 Z" fill="#2b2b2b" stroke="#6b6b6b" stroke-width="1"/><path d="M3 6 H10" stroke="#7a7a7a" stroke-width="1"/></svg>
<div class="a" style="left:710px;top:0;width:2px;height:1.5px;background:#c98a8a"></div><div class="a" style="left:782px;top:0;width:2px;height:1.5px;background:#c98a8a"></div>
<div class="a" style="left:415px;top:204px;width:9.5px;height:9.5px;background:#fefefe;outline:1px solid #222"></div>
<svg class="a" style="left:470px;top:480px" width="14" height="19" viewBox="0 0 14 19"><path d="M7 0.5 C10.6 0.5 13.5 3.3 13.5 6.8 C13.5 9.2 12 10.6 11 12 L3 12 C2 10.6 0.5 9.2 0.5 6.8 C0.5 3.3 3.4 0.5 7 0.5 Z" fill="#f0a732"/><rect x="3" y="13" width="8" height="1.6" fill="#9a9a9a"/><rect x="3.5" y="15.5" width="7" height="1.6" fill="#9a9a9a"/></svg>
</div>
<div class="a" style="left:1057.5px;top:62.5px;width:100.0px;height:52.5px;border:3.5px solid #e02b22;border-radius:4px"></div>
<div class="a" style="left:582.0px;top:481.0px;width:149.0px;height:35.0px;border:3.5px solid #e02b22;border-radius:4px"></div>
<div class="a" style="left:601.0px;top:575.0px;width:320.0px;height:75.0px;border:3.5px solid #e02b22;border-radius:4px"></div>
</body></html>
